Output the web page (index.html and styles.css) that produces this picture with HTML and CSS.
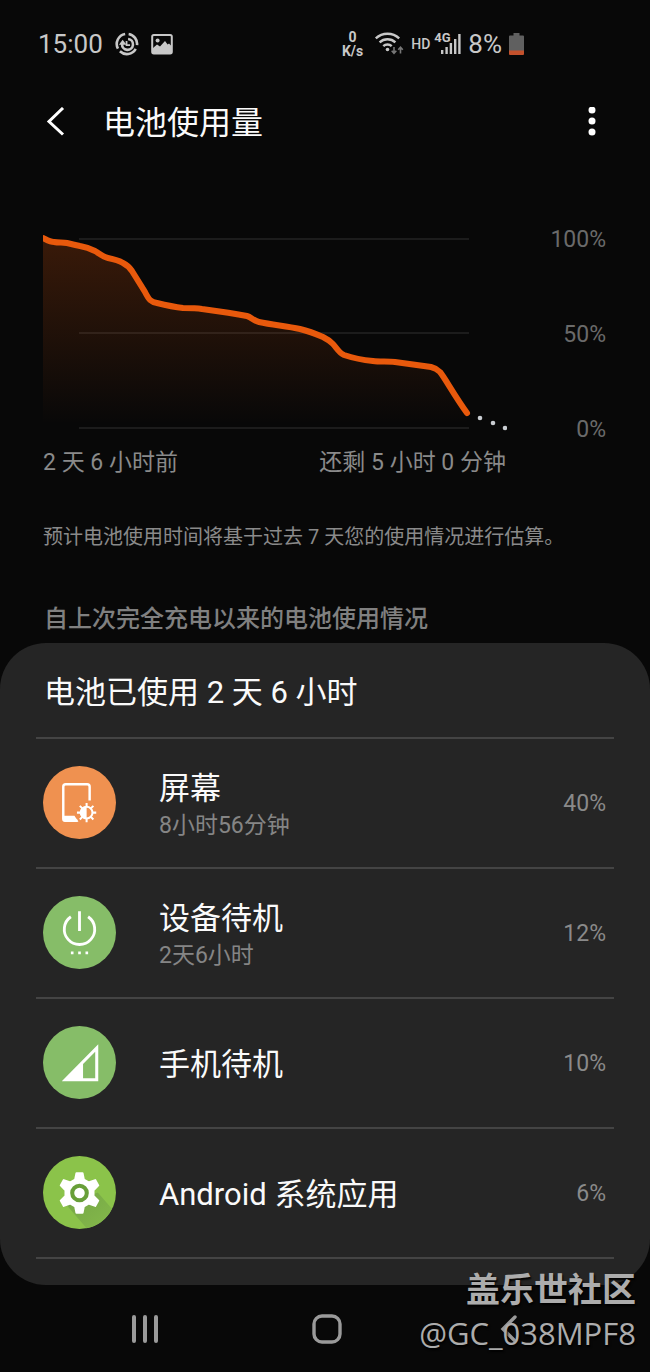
FILE: index.html
```html
<!DOCTYPE html>
<html lang="zh-CN">
<head>
  <meta charset="UTF-8">
  <meta name="viewport" content="width=device-width, initial-scale=1">
  <title>电池使用量</title>
  <link rel="stylesheet" href="styles.css">
</head>
<body>
  <div class="statusbar">
    <div class="status-group status-left">
      <span class="status-text">15:00</span>
      <svg width="24" height="24" viewBox="0 0 22 22" fill="none" stroke="#c8c8c8" stroke-width="2.4">
        <path d="M12.5 1.8A9.3 9.3 0 0 1 20.2 12M19 15.5A9.3 9.3 0 0 1 4.5 17.7M2.7 15.3A9.3 9.3 0 0 1 9.3 1.8"/>
        <path d="M12 6.4A5 5 0 1 1 6.5 11"/>
        <path d="M3.6 11.6L7 7l3.6 4.6z" fill="#c8c8c8" stroke="none"/>
        <path d="M10.6 8.2V12h3.2" stroke-width="1.6"/>
      </svg>
      <svg width="22" height="22" viewBox="0 0 22 22">
        <rect x="1.2" y="2" width="19.6" height="18.4" rx="1.6" fill="none" stroke="#c8c8c8" stroke-width="2"/>
        <circle cx="6.6" cy="7.4" r="2" fill="#c8c8c8"/>
        <path d="M2 15l4-3.4 3 2 5-5.6 2.6 3.4L18 10.4l3 3V20H2z" fill="#c8c8c8"/>
      </svg>
    </div>
    <div class="status-group status-right">
      <span class="net-speed"><span>0</span><span>K/s</span></span>
      <svg width="30" height="24" viewBox="0 0 30 24" fill="none" stroke="#c8c8c8" stroke-width="2.4">
        <path d="M1.8 6.4a17 17 0 0 1 23.4 0M5.6 10.4a11.5 11.5 0 0 1 15.800 0M9.300 14.200a6 6 0 0 1 8.400 0"/>
        <circle cx="13.500" cy="17.500" r="1.800" fill="#c8c8c8" stroke="none"/>
        <path d="M20 15v6M17.700 18.700l2.300 2.500 2.300-2.500M26.500 21.500v-6M24.200 17.700l2.300-2.500 2.300 2.500" stroke="#777" stroke-width="1.600"/>
      </svg>
      <span class="hd">HD</span>
      <span class="signal">
        <span class="signal-type">4G</span>
        <svg width="20" height="20" viewBox="0 0 20 20" fill="#c8c8c8">
          <path d="M0 16h2.400v4H0zM4.400 13h2.400v7H4.400zM8.700 9h2.400v11H8.700zM13 5h2.400v15H13zM17.200 0h2.400v20h-2.400z"/>
        </svg>
      </span>
      <span class="status-text">8%</span>
      <svg width="15" height="22" viewBox="0 0 15 22">
        <path d="M4.500 0h6v2.500H14a1 1 0 0 1 1 1V18H0V3.500a1 1 0 0 1 1-1h3.500z" fill="#606060"/>
        <path d="M0 17.500h15V21a1 1 0 0 1-1 1H1a1 1 0 0 1-1-1z" fill="#c4512c"/>
      </svg>
    </div>
  </div>

  <header class="appbar">
    <button class="icon-btn" aria-label="返回">
      <svg width="20" height="30" viewBox="0 0 20 30" fill="none" stroke="#fff" stroke-width="3">
        <path d="M17 1L3 14.500l14 13"/>
      </svg>
    </button>
    <h1>电池使用量</h1>
    <button class="icon-btn" aria-label="更多选项">
      <svg width="8" height="30" viewBox="0 0 8 30" fill="#fff">
        <circle cx="4" cy="3" r="3.500"/><circle cx="4" cy="14" r="3.500"/><circle cx="4" cy="25" r="3.500"/>
      </svg>
    </button>
  </header>

  <main>
    <section class="usage">
      <div class="chart">
        <svg class="chart-plot" viewBox="0 -2 464 214">
          <defs>
            <linearGradient id="fade" x1="0" y1="8" x2="0" y2="194" gradientUnits="userSpaceOnUse">
              <stop offset="0" stop-color="#e8590c" stop-opacity=".22"/>
              <stop offset="1" stop-color="#e8590c" stop-opacity="0"/>
            </linearGradient>
          </defs>
          <path d="M36 9H426M36 103H426M36 198H426" stroke="#1c1c1c" stroke-width="2"/>
          <path fill="url(#fade)" d="M0 8C4 10 7 12 11 12C16 13 20 12 24 13C28 14 32 15 37 16C43 17 48 19 52 21C57 24 60 27 65 28C70 29 75 30 80 33C84 35 87 38 89 41L102 62C106 70 108 72 114 73C122 75 131 77 140 78C146 78 153 78 159 79C174 81 189 83 204 86C208 87 211 91 216 92C230 95 243 96 257 99C265 101 273 104 280 107C284 109 287 111 290 114C293 117 296 123 301 125C310 128 320 130 330 131C337 132 345 131 352 132L388 137C392 138 394 139 397 142C402 148 411 165 424 183V197H0z"/>
          <path fill="none" stroke="#e8590c" stroke-width="6" stroke-linecap="round" d="M-4 7L0 8C4 10 7 12 11 12C16 13 20 12 24 13C28 14 32 15 37 16C43 17 48 19 52 21C57 24 60 27 65 28C70 29 75 30 80 33C84 35 87 38 89 41L102 62C106 70 108 72 114 73C122 75 131 77 140 78C146 78 153 78 159 79C174 81 189 83 204 86C208 87 211 91 216 92C230 95 243 96 257 99C265 101 273 104 280 107C284 109 287 111 290 114C293 117 296 123 301 125C310 128 320 130 330 131C337 132 345 131 352 132L388 137C392 138 394 139 397 142C402 148 411 165 424 183"/>
          <g fill="#c9cdd2">
            <circle cx="437" cy="188" r="2.300"/><circle cx="450" cy="193" r="2.300"/><circle cx="462" cy="198" r="2.300"/>
          </g>
        </svg>
        <div class="chart-scale">
          <span>100%</span>
          <span>50%</span>
          <span>0%</span>
        </div>
      </div>
      <div class="chart-times">
        <span>2 天 6 小时前</span>
        <span>还剩 5 小时 0 分钟</span>
      </div>
      <p class="estimate">预计电池使用时间将基于过去 7 天您的使用情况进行估算。</p>
      <h2>自上次完全充电以来的电池使用情况</h2>
    </section>

    <section class="card">
      <h3>电池已使用 2 天 6 小时</h3>
      <ul>
        <li>
          <a href="#screen" class="row">
            <svg class="row-icon" viewBox="0 0 72 72">
              <circle cx="36" cy="36" r="36" fill="#ef9150"/>
              <path d="M46 34V20.500a2.500 2.500 0 0 0-2.500-2.500H22.500a2.500 2.500 0 0 0-2.500 2.500V52a2 2 0 0 0 2 2H34" fill="none" stroke="#fff" stroke-width="2.400"/>
              <path d="M20 49H31l4 6H22a2 2 0 0 1-2-2z" fill="#fff"/>
              <g stroke="#fff" stroke-width="2">
                <path d="M43 36.500v4M43 51.500v4M33.500 46h4M48.500 46h4M36.300 39.300l3 3M46.700 49.700l3 3M36.300 52.700l3-3M46.700 42.300l3-3"/>
                <circle cx="43" cy="46" r="5.800" fill="#ef9150"/>
              </g>
              <path d="M43 40a6 6 0 0 0 0 12z" fill="#fff"/>
            </svg>
            <span class="row-text">
              <span class="row-name">屏幕</span>
              <span class="row-time">8小时56分钟</span>
            </span>
            <span class="row-value">40%</span>
          </a>
        </li>
        <li>
          <a href="#device-idle" class="row">
            <svg class="row-icon" viewBox="0 0 72 72">
              <circle cx="36" cy="36" r="36" fill="#86bd68"/>
              <path d="M36 15v19.500M27.500 20.500a15 15 0 1 0 17 0" fill="none" stroke="#fff" stroke-width="2.800"/>
              <path d="M27.500 54.800h2.600v2.600h-2.600zM34.700 54.800h2.600v2.600h-2.600zM41.900 54.800h2.600v2.600h-2.600z" fill="#fff"/>
            </svg>
            <span class="row-text">
              <span class="row-name">设备待机</span>
              <span class="row-time">2天6小时</span>
            </span>
            <span class="row-value">12%</span>
          </a>
        </li>
        <li>
          <a href="#phone-idle" class="row">
            <svg class="row-icon" viewBox="0 0 72 72">
              <circle cx="36" cy="36" r="36" fill="#86bd68"/>
              <path fill="#fff" fill-rule="evenodd" d="M54.500 18v36.500h-36zM51.500 25.500L39.500 37.500v14h12z"/>
            </svg>
            <span class="row-text">
              <span class="row-name">手机待机</span>
            </span>
            <span class="row-value">10%</span>
          </a>
        </li>
        <li>
          <a href="#android-system" class="row">
            <svg class="row-icon" viewBox="0 0 72 72">
              <defs>
                <linearGradient id="gear-shadow" x1="36" y1="36" x2="60" y2="66" gradientUnits="userSpaceOnUse">
                  <stop offset="0" stop-color="#76a846"/>
                  <stop offset="1" stop-color="#82b64a"/>
                </linearGradient>
              </defs>
              <circle cx="36" cy="36" r="36" fill="#8bc34a"/>
              <path d="M23 48l20 23.300A36 36 0 0 0 68 52L54 36z" fill="url(#gear-shadow)"/>
              <path fill="#fff" stroke="#fff" stroke-width="2" stroke-linejoin="round" d="M33 17h6l1.300 6.300 4.700 2.700 6.500-2.200 3 5.200-4.700 4.700v5.600l4.700 4.700-3 5.200-6.500-2.200-4.700 2.700-1.300 6.300h-6l-1.300-6.300-4.700-2.700-6.500 2.200-3-5.200 4.700-4.700v-5.600l-4.700-4.700 3-5.200 6.500 2.200 4.700-2.700z"/>
              <circle cx="36" cy="36.500" r="7.200" fill="#fff" stroke="#689f38" stroke-width="4"/>
            </svg>
            <span class="row-text">
              <span class="row-name">Android 系统应用</span>
            </span>
            <span class="row-value">6%</span>
          </a>
        </li>
      </ul>
    </section>
  </main>

  <footer class="bottom">
    <nav class="navbar">
      <button class="icon-btn" aria-label="最近使用">
        <svg width="28" height="30" viewBox="0 0 28 30" stroke="#9a9a9a" stroke-width="4" stroke-linecap="round">
          <path d="M3 3v24M14 3v24M25 3v24"/>
        </svg>
      </button>
      <button class="icon-btn" aria-label="主屏幕">
        <svg width="30" height="30" viewBox="0 0 30 30" fill="none" stroke="#9a9a9a" stroke-width="3.400">
          <rect x="2" y="2" width="26" height="26" rx="8"/>
        </svg>
      </button>
      <button class="icon-btn" aria-label="返回上一页">
        <svg width="28" height="30" viewBox="0 0 28 30" fill="none" stroke="#9a9a9a" stroke-width="3.400" stroke-linecap="round">
          <path d="M20 3L8 15l12 12"/>
        </svg>
      </button>
    </nav>
    <div class="watermark">
      <span class="watermark-site">盖乐世社区</span>
      <span class="watermark-user">@GC_038MPF8</span>
    </div>
  </footer>
</body>
</html>
```
FILE: styles.css
```css
* {
  box-sizing: border-box;
}

body {
  margin: 0;
  background-color: #080808;
  color: #fafafa;
  font-family: Roboto, "Noto Sans CJK SC", sans-serif;
}

h1, h2, h3, p, ul {
  margin: 0;
  padding: 0;
  font-weight: normal;
}

ul {
  list-style: none;
}

svg {
  display: block;
}

.icon-btn {
  display: flex;
  padding: 0;
  border: none;
  background: none;
  cursor: pointer;
}

/* status bar */
.statusbar {
  display: flex;
  justify-content: space-between;
  align-items: center;
  height: 87px;
  padding: 0 126px 0 38px;
  color: #c8c8c8;
}

.status-group {
  display: flex;
  align-items: center;
}

.status-left {
  gap: 12px;
}

.status-right {
  gap: 7px;
}

.status-text {
  font-size: 26px;
  line-height: 32px;
}

.net-speed {
  display: flex;
  flex-direction: column;
  align-items: center;
  margin-right: 4px;
  font-size: 14px;
  font-weight: bold;
  line-height: 14px;
}

.hd {
  font-size: 14px;
  font-weight: 500;
  line-height: 20px;
}

.signal {
  position: relative;
  padding-left: 4px;
}

.signal-type {
  position: absolute;
  top: -2px;
  left: -3px;
  font-size: 13px;
  font-weight: bold;
  line-height: 12px;
}

/* title bar */
.appbar {
  display: flex;
  align-items: center;
  height: 70px;
  padding: 0 54px 0 46px;
}

.appbar h1 {
  flex: 1;
  margin-left: 37px;
  padding-top: 2px;
  font-size: 32px;
  line-height: 48px;
}

/* chart */
.usage {
  padding: 71px 44px 8px 43px;
}

.chart {
  display: grid;
  grid-template-columns: 1fr 99px;
}

.chart-plot {
  width: 100%;
}

.chart-scale {
  display: flex;
  flex-direction: column;
  justify-content: space-between;
  text-align: right;
  color: #6a6a6a;
  font-size: 23px;
  line-height: 24px;
}

.chart-times {
  display: flex;
  justify-content: space-between;
  margin-top: 5px;
  padding-right: 100px;
  color: #8a8a8a;
  font-size: 23px;
  line-height: 32px;
}

.estimate {
  margin-top: 42px;
  color: #8a8a8a;
  font-size: 20px;
  line-height: 32px;
}

.usage h2 {
  margin-top: 50px;
  padding-left: 1px;
  color: #808080;
  font-size: 24px;
  font-weight: 500;
  line-height: 32px;
}

/* list of consumers */
.card {
  padding: 0 36px 26px;
  border-radius: 46px;
  background-color: #252525;
}

.card h3 {
  padding: 26px 8px 20px;
  border-bottom: 2px solid #444;
  font-size: 31px;
  line-height: 48px;
}

.row {
  display: flex;
  align-items: center;
  height: 130px;
  padding: 0 8px 0 7px;
  border-bottom: 2px solid #444;
  color: inherit;
  text-decoration: none;
}

.row-icon {
  width: 73px;
  height: 73px;
  margin-bottom: 2px;
}

.row-text {
  display: flex;
  flex: 1;
  flex-direction: column;
  margin-left: 43px;
  padding-top: 4px;
}

.row-name {
  font-size: 31px;
  line-height: 40px;
}

.row-time {
  padding-top: 1px;
  color: #858585;
  font-size: 23px;
  line-height: 32px;
}

.row-value {
  color: #8a8a8a;
  font-size: 23px;
}

/* system navigation */
.bottom {
  position: relative;
}

.navbar {
  display: flex;
  justify-content: space-between;
  align-items: center;
  height: 87px;
  padding: 0 127px 0 131px;
}

.watermark {
  position: absolute;
  right: 14px;
  bottom: 18px;
  display: flex;
  flex-direction: column;
  align-items: flex-end;
  color: #acacac;
  text-shadow: 1px 2px 2px #000;
  pointer-events: none;
}

.watermark-site {
  font-size: 34px;
  font-weight: bold;
  line-height: 44px;
}

.watermark-user {
  font-family: "Open Sans", sans-serif;
  font-size: 31px;
  line-height: 42px;
}
```
